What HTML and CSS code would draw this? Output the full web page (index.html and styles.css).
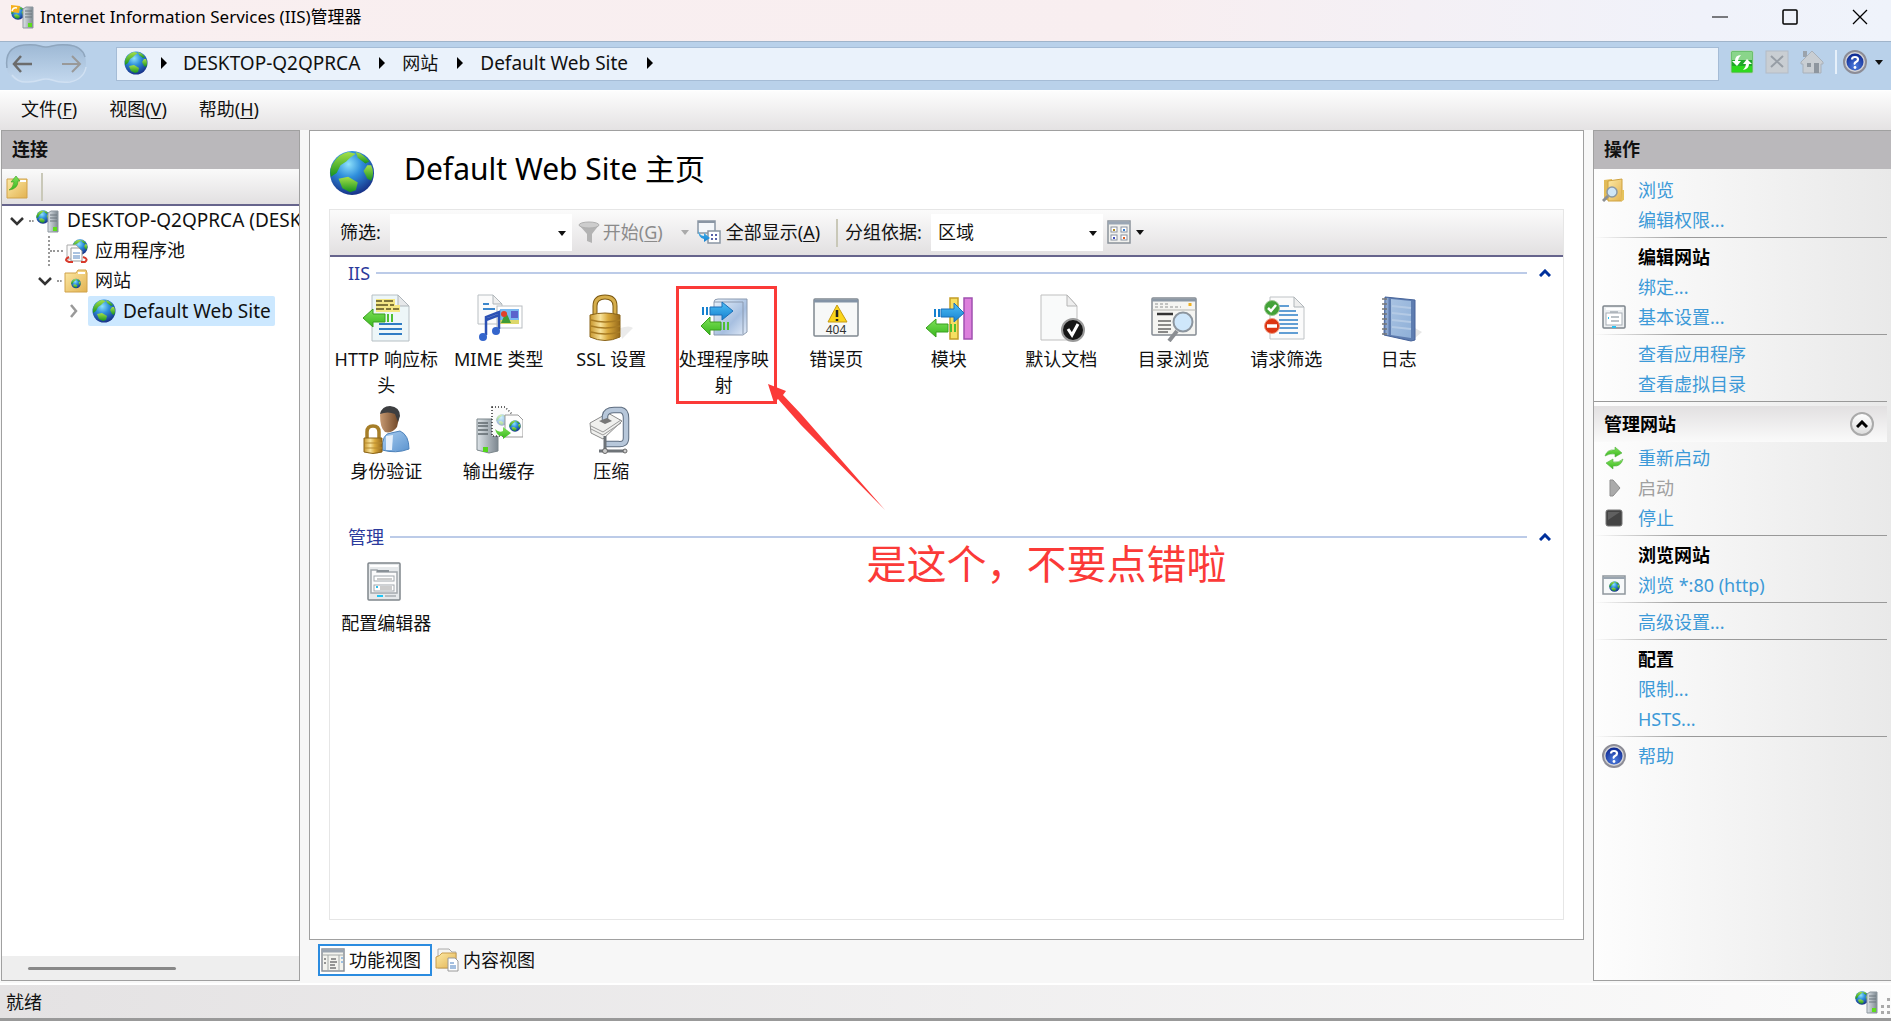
FILE: index.html
```html
<!DOCTYPE html>
<html lang="zh-CN">
<head>
<meta charset="utf-8">
<title>Internet Information Services (IIS)管理器</title>
<link rel="stylesheet" href="styles.css">
</head>
<body>
<svg class="sprite" aria-hidden="true">
  <defs>
    <radialGradient id="gSea" cx=".42" cy=".3" r=".75"><stop offset="0" stop-color="#8fe2fb"/><stop offset=".4" stop-color="#2f8fdc"/><stop offset="1" stop-color="#15277f"/></radialGradient>
    <linearGradient id="gLand" x1="0" y1="0" x2="0" y2="1"><stop offset="0" stop-color="#a5e04a"/><stop offset="1" stop-color="#15921e"/></linearGradient>
    <linearGradient id="gGreen" x1="0" y1="0" x2="0" y2="1"><stop offset="0" stop-color="#7fe05a"/><stop offset="1" stop-color="#38b81c"/></linearGradient>
    <linearGradient id="gBlue" x1="0" y1="0" x2="0" y2="1"><stop offset="0" stop-color="#4fc0f5"/><stop offset="1" stop-color="#1580d0"/></linearGradient>
    <linearGradient id="gGold" x1="0" y1="0" x2="1" y2="0"><stop offset="0" stop-color="#c8962c"/><stop offset=".35" stop-color="#f8e39a"/><stop offset=".6" stop-color="#d9a93c"/><stop offset="1" stop-color="#96691a"/></linearGradient>
    <linearGradient id="gFolder" x1="0" y1="0" x2="1" y2="1"><stop offset="0" stop-color="#fdeaa6"/><stop offset="1" stop-color="#e2b251"/></linearGradient>
    <linearGradient id="gSteel" x1="0" y1="0" x2="1" y2="0"><stop offset="0" stop-color="#dde3e8"/><stop offset="1" stop-color="#7d8890"/></linearGradient>
    <linearGradient id="gBox" x1="0" y1="0" x2="1" y2="1"><stop offset="0" stop-color="#e9f3fc"/><stop offset=".6" stop-color="#a7bfe0"/><stop offset="1" stop-color="#e3ecf8"/></linearGradient>
    <linearGradient id="gBook" x1="0" y1="0" x2="1" y2="1"><stop offset="0" stop-color="#a8c2e2"/><stop offset="1" stop-color="#8fb0d8"/></linearGradient>
    <linearGradient id="gShirt" x1="0" y1="0" x2="1" y2="1"><stop offset="0" stop-color="#a9cdf0"/><stop offset="1" stop-color="#5c94cf"/></linearGradient>
    <linearGradient id="gSkin" x1="0" y1="0" x2="1" y2="0"><stop offset="0" stop-color="#c79a72"/><stop offset="1" stop-color="#6e4526"/></linearGradient>
    <radialGradient id="gHelp" cx=".5" cy=".75" r=".7"><stop offset="0" stop-color="#4f7fe0"/><stop offset="1" stop-color="#0f2b94"/></radialGradient>
    <linearGradient id="gPill" x1="0" y1="0" x2="0" y2="1"><stop offset="0" stop-color="#9db8d4"/><stop offset="1" stop-color="#c3d8ee"/></linearGradient>
  </defs>
  <symbol id="globe" viewBox="0 0 24 24"><circle cx="12" cy="12" r="11.500" fill="url(#gSea)"/><path d="M2 7Q5 2 10 1L14 2L11 4L9 6L6 8L4 12L1 14Q0 10 2 7Z" fill="url(#gLand)"/><path d="M14 1Q18 2 21 6L19 7L15 4Z" fill="url(#gLand)"/><path d="M20 8L22 8Q24 12 22 16L20 15L18 11Z" fill="url(#gLand)"/><path d="M5 15L10 14L15 17L14 21L11 22L7 20Z" fill="url(#gLand)"/></symbol>
  <symbol id="server" viewBox="0 0 24 24"><use href="#globe" x="0" y="0" width="14" height="16"/><path d="M12 4L15 2H22V23H12Z" fill="url(#gSteel)" stroke="#8d979f"/><path d="M14 6H21M14 9H21M14 12H21" stroke="#6c767e"/><rect x="17" y="18" width="4" height="4" fill="#5fdc1c"/></symbol>
  <symbol id="app" viewBox="0 0 24 24"><use href="#server"/><path d="M0 0L9 1L8 8L0 7Z" fill="#f5b01f"/><path d="M1 6Q2 2 6 3" fill="none" stroke="#fff" stroke-width="1.500"/></symbol>
  <symbol id="up-folder" viewBox="0 0 24 24"><path d="M2 4H22V23H2Z" fill="url(#gFolder)" stroke="#d0a24a"/><path d="M15 6H21" stroke="#fff" stroke-width="2"/><path d="M4 15Q8 13 9 7L6 7L11 1L15 6L13 6Q13 14 4 15Z" fill="url(#gGreen)" stroke="#3a9a22" stroke-width=".6"/></symbol>
  <symbol id="pool" viewBox="0 0 24 24"><use href="#globe" x="8" y="0" width="16" height="16"/><path d="M3 6H12L15 9V20H3Z" fill="#fafafa" stroke="#aaa"/><path d="M7 9H15L18 12V22H7Z" fill="#fff" stroke="#999"/><path d="M9 14H16M9 17H16M9 19H16" stroke="#5585c0"/><path d="M5 18Q-1 21 5 23H9M17 23H21Q25 20 19 18" fill="none" stroke="#d83a2c" stroke-width="2"/></symbol>
  <symbol id="sites" viewBox="0 0 24 24"><path d="M1 4H12L14 1H22L23 4V23H1Z" fill="url(#gFolder)" stroke="#d0a24a"/><path d="M14 4H21" stroke="#fff" stroke-width="2"/><use href="#globe" x="7" y="9" width="10" height="11"/></symbol>
  <symbol id="funnel" viewBox="0 0 24 24"><path d="M2 5L10 14V21L15 23V14L22 5Z" fill="#b3b3b3"/><ellipse cx="12" cy="5" rx="10" ry="3" fill="#cdcdcd" stroke="#b0b0b0"/></symbol>
  <symbol id="show-all" viewBox="0 0 24 24"><rect x="1" y="1" width="17" height="12" fill="#f4f7fa" stroke="#8a96a4" stroke-width="1.500"/><path d="M1 2H18" stroke="#8a96a4" stroke-width="2"/><rect x="11" y="11" width="12" height="12" fill="#fff" stroke="#8a96a4" stroke-width="1.500"/><path d="M14 15H16M18 15H20M14 19H16M18 19H20" stroke="#5862a8" stroke-width="2"/><path d="M1 9Q2 16 7 16V13L13 18L7 22V19Q1 18 1 9Z" fill="url(#gBlue)"/></symbol>
  <symbol id="view-mode" viewBox="0 0 24 24"><rect x="1" y="1" width="22" height="22" fill="#f1f1ee" stroke="#8a929a" stroke-width="1.500"/><path d="M1 3H23" stroke="#9aa6b4" stroke-width="3"/><g fill="#fff" stroke="#8891a0"><rect x="4" y="7" width="6" height="5"/><rect x="14" y="7" width="6" height="5"/><rect x="4" y="15" width="6" height="5"/><rect x="14" y="15" width="6" height="5"/></g><path d="M6 10H8" stroke="#b08c20" stroke-width="2"/><path d="M16 10H18" stroke="#3a80d0" stroke-width="2"/><path d="M6 18H8" stroke="#4050c0" stroke-width="2"/><path d="M16 18H18" stroke="#e06020" stroke-width="2"/></symbol>
  <symbol id="refresh" viewBox="0 0 24 24"><rect x="1" y="1" width="22" height="22" rx="1" fill="#20a82a" stroke="#b7d9b5"/><rect x="2" y="2" width="20" height="8" fill="#8ad58a"/><rect x="2" y="16" width="20" height="6" fill="#2ed81e"/><path d="M11 5Q5 5 5 11H2L7 16L11 11H8Q8 8 11 5Z" fill="#fff"/><path d="M13 20Q19 19 19 14H22L17 9L13 14H16Q16 17 13 20Z" fill="#fff"/></symbol>
  <symbol id="stop-load" viewBox="0 0 24 24"><rect x="1" y="1" width="22" height="22" fill="#c9ced3" stroke="#b4bcc6"/><path d="M6 6L18 17M18 6L6 17" stroke="#979ea6" stroke-width="2"/></symbol>
  <symbol id="home" viewBox="0 0 24 24"><path d="M3 1H7V7H3Z" fill="#9ba3ac"/><path d="M12 1L23 12V14H21V23H3V14H1V12Z" fill="#c9ced3" stroke="#a9b1ba"/><rect x="14" y="13" width="5" height="10" fill="#8e969f"/><rect x="7" y="13" width="4" height="4" fill="#9098a0"/></symbol>
  <symbol id="help" viewBox="0 0 24 24"><circle cx="12" cy="12" r="11" fill="#d3d3d6" stroke="#8c8c96" stroke-width="2"/><circle cx="12" cy="12" r="8.500" fill="url(#gHelp)"/><path d="M9 9.500Q9 7 12 7T15 9.500Q15 11 13 12T12 14.500" fill="none" stroke="#fff" stroke-width="2.200"/><circle cx="12" cy="17.500" r="1.400" fill="#fff"/></symbol>
  <symbol id="browse" viewBox="0 0 24 24"><path d="M2 2L10 1V22H2Z" fill="#e2bb58"/><path d="M6 3L20 1V23H6Z" fill="url(#gFolder)" stroke="#cfa23f"/><path d="M20 12H22V22L19 23Z" fill="#e5c25c"/><circle cx="10" cy="14" r="5" fill="#cfe6f8" stroke="#8b98a4" stroke-width="1.500"/><path d="M6 18L1 23" stroke="#8b8f94" stroke-width="3"/></symbol>
  <symbol id="settings" viewBox="0 0 24 24"><rect x="1" y="1" width="22" height="22" rx="1" fill="#eceff1" stroke="#7e858c" stroke-width="1.500"/><path d="M4 4H20" stroke="#fff" stroke-width="2"/><rect x="4" y="8" width="16" height="12" fill="#fff" stroke="#a7aeb5"/><path d="M8 7H16M9 12H17M9 16H17" stroke="#a7aeb5" stroke-width="1.500"/><path d="M6 13H7M10 22H14" stroke="#28c0f0" stroke-width="2"/></symbol>
  <symbol id="restart" viewBox="0 0 24 24"><path d="M3 10Q5 3 13 4V1L20 7L13 11V8Q8 7 3 10Z" fill="url(#gGreen)" stroke="#55b045" stroke-width=".6"/><path d="M21 13Q19 21 11 20V23L4 17L11 13V16Q17 17 21 13Z" fill="url(#gGreen)" stroke="#55b045" stroke-width=".6"/></symbol>
  <symbol id="play" viewBox="0 0 24 24"><path d="M8 4L11 4L18 12L11 20H8Z" fill="#aaa" stroke="#8d8d8d"/></symbol>
  <symbol id="stop" viewBox="0 0 24 24"><rect x="4" y="4" width="16" height="16" rx="2" fill="#444" stroke="#777"/><path d="M6 14L18 6V6H6Z" fill="#606060"/></symbol>
  <symbol id="web-window" viewBox="0 0 24 24"><rect x="1" y="3" width="22" height="18" fill="#f7f9fa" stroke="#8f969d" stroke-width="1.500"/><path d="M1 5H23" stroke="#9aa5b0" stroke-width="2"/><use href="#globe" x="7" y="8" width="11" height="11"/></symbol>
  <symbol id="features" viewBox="0 0 24 24"><rect x="1" y="1" width="22" height="22" fill="#f3f3ee" stroke="#8a9098" stroke-width="1.500"/><path d="M1 3H23" stroke="#9aa4b0" stroke-width="3"/><path d="M1 7H23M7 7V23M18 7V23" stroke="#a4a9a8"/><path d="M10 11H15M9 14H16M9 17H14M9 20H15M3 11H5M3 15H5" stroke="#777" stroke-width="1.300"/><path d="M20 10H22M20 14H22" stroke="#4a90d8"/></symbol>
  <symbol id="content" viewBox="0 0 24 24"><path d="M3 5V1H14L17 4H21V20H3Z" fill="#f4f4f2" stroke="#aaa"/><path d="M1 20V9Q5 8 7 5H21V20Z" fill="url(#gFolder)" stroke="#c99d4c"/><path d="M13 10H20L23 13V23H13Z" fill="#fff" stroke="#999"/><path d="M15 15H19M15 18H21M15 20H21" stroke="#4a80c0"/></symbol>

  <symbol id="http" viewBox="0 0 48 48"><path d="M10 1H36L47 12V47H10Z" fill="#edf6f8" stroke="#b6bfc4"/><path d="M36 1V12H47Z" fill="#e6e8ea" stroke="#aeb5ba"/><path d="M14 5H33V11H38V18H14Z" fill="#f4e785"/><path d="M14 7H20M22 7H31M14 11H26M28 11H32M14 15H22M24 15H29M31 15H37" stroke="#5b5322" stroke-width="1.500"/><path d="M17 30H40M17 35H40M17 40H40" stroke="#2f7cc4" stroke-width="2"/><path d="M1 24L11 15V20H23V28H11V33Z" fill="url(#gGreen)" stroke="#3aa020"/><path d="M26 20V28M30 20V28" stroke="#4fc030" stroke-width="2"/></symbol>
  <symbol id="mime" viewBox="0 0 48 48"><path d="M3 1H18L27 10V30H3Z" fill="#fbfbfb" stroke="#b9bfc3"/><path d="M18 1V10H27Z" fill="#eee" stroke="#b0b6ba"/><path d="M8 10H14M8 15H20" stroke="#3c86cc" stroke-width="2"/><rect x="22" y="12" width="25" height="22" fill="#fff" stroke="#b9bec2"/><rect x="25" y="15" width="19" height="15" fill="#79b8f0"/><path d="M25 30V26H44V30Z" fill="#ddd86a"/><path d="M26 29L31 18L36 29Z" fill="#3f9c35"/><circle cx="29" cy="20" r="3" fill="#e0402a"/><rect x="36" y="17" width="7" height="7" fill="#5a62cc"/><path d="M11 41V23L24 18V35M11 26L24 21" fill="none" stroke="#2b50b4" stroke-width="2.500"/><ellipse cx="8" cy="43" rx="4" ry="4" fill="#3465cc"/><ellipse cx="21" cy="37" rx="4" ry="4" fill="#3465cc"/></symbol>
  <symbol id="lock" viewBox="0 0 48 48"><path d="M35 45L46 34Q43 31 33 34Z" fill="#ebebeb"/><path d="M8 22V12Q8 3 18 3T28 12V22" fill="none" stroke="#7d5a14" stroke-width="5"/><path d="M8 22V12Q8 3 18 3T28 12V22" fill="none" stroke="#d6ae4c" stroke-width="3"/><path d="M3 21Q18 17 33 21V43Q18 50 3 43Z" fill="url(#gGold)" stroke="#8a641a"/><path d="M4 26Q18 30 33 26M4 32Q18 36 33 32M4 38Q18 42 33 38" fill="none" stroke="#a87c24" stroke-width="1.500"/></symbol>
  <symbol id="handler" viewBox="0 0 48 48"><path d="M14 8Q14 5 18 5H47V38L43 41H14Z" fill="url(#gBox)" stroke="#8b9ab0"/><path d="M43 8V40M14 8H43" stroke="#8b9ab0"/><path d="M10 13H22V8L33 17L22 26V21H10Z" fill="url(#gBlue)" stroke="#1b6fb8"/><path d="M3 13V21M7 13V21" stroke="#1580d0" stroke-width="2"/><path d="M1 32L10 23V28H21V36H10V41Z" fill="url(#gGreen)" stroke="#3aa020"/><path d="M24 28V36M28 28V36" stroke="#50c030" stroke-width="2"/></symbol>
  <symbol id="modules" viewBox="0 0 48 48"><rect x="25" y="4" width="8" height="41" fill="#f5df62" stroke="#c39d26" stroke-width="1.500"/><rect x="39" y="4" width="8" height="41" fill="#dc80dc" stroke="#a050b0" stroke-width="1.500"/><path d="M16 15H29V9L39 19L29 28V23H16Z" fill="url(#gBlue)" stroke="#1b6fb8"/><path d="M10 15V23M14 15V23" stroke="#1580d0" stroke-width="2"/><path d="M1 34L11 25V30H23V38H11V43Z" fill="url(#gGreen)" stroke="#3aa020"/><path d="M26 30V38M30 30V38" stroke="#50c030" stroke-width="2"/></symbol>
  <symbol id="default-doc" viewBox="0 0 48 48"><path d="M4 1H30L40 12V46H4Z" fill="#f9fafa" stroke="#bfbfbf"/><path d="M30 1V12H40Z" fill="#eee" stroke="#b5b5b5"/><circle cx="36" cy="36" r="11" fill="#161616" stroke="#9a9a9a" stroke-width="2"/><path d="M31 35L35 41L41 30" fill="none" stroke="#fff" stroke-width="3"/></symbol>
  <symbol id="dir" viewBox="0 0 48 48"><rect x="2" y="4" width="44" height="37" rx="1" fill="#f5f5f2" stroke="#848b92" stroke-width="1.500"/><path d="M2 6H46" stroke="#8b97a4" stroke-width="3"/><path d="M5 10H20M5 13H31" stroke="#8f9191" stroke-dasharray="3 2"/><path d="M2 16H46" stroke="#b5b5b0"/><path d="M40 9V12" stroke="#f0b020" stroke-width="3"/><path d="M7 20H23" stroke="#333" stroke-width="2.500"/><path d="M8 27H21M8 31H21M8 35H21M8 38H18" stroke="#666" stroke-width="1.500"/><path d="M27 37L19 47" stroke="#8b8e92" stroke-width="4"/><circle cx="33" cy="28" r="9.500" fill="#cfe7fb" stroke="#8c959e" stroke-width="2"/></symbol>
  <symbol id="filter" viewBox="0 0 48 48"><path d="M8 3H32L42 13V45H8Z" fill="#fbfbfb" stroke="#bfc3c6"/><path d="M32 3V13H42Z" fill="#eee" stroke="#b0b6ba"/><path d="M17 12H27M17 17H34M17 21H36M17 26H36M17 30H36M17 34H36M17 39H36" stroke="#2f80c8" stroke-width="1.700"/><circle cx="10" cy="14" r="7.500" fill="#43a238" stroke="#9bc690"/><path d="M6 14L9 17L14 11" fill="none" stroke="#fff" stroke-width="2.500"/><circle cx="10" cy="32" r="7.500" fill="#dc3412" stroke="#ef9a80"/><path d="M5 32H15" stroke="#fff" stroke-width="3.500"/></symbol>
  <symbol id="log" viewBox="0 0 48 48"><path d="M40 44L47 38L38 33Z" fill="#e6e6e6"/><path d="M10 3L40 6V46L36 47L9 41Z" fill="#5e7db0" stroke="#46639a"/><path d="M16 5L36 7V44L16 41Z" fill="url(#gBook)"/><path d="M17 12L36 14M17 19L36 21M17 26L36 28M17 33L36 35" stroke="#b4cae5" stroke-width="2"/><path d="M12 4V41" stroke="#8ba6cf" stroke-width="3"/><path d="M7 5H12M7 10H12M7 15H12M7 20H12M7 25H12M7 30H12M7 35H12M7 40H12" stroke="#777" stroke-width="1.700"/></symbol>
  <symbol id="auth" viewBox="0 0 48 48"><path d="M20 44Q20 27 29 27L38 25Q47 29 47 43Q34 48 20 44Z" fill="url(#gShirt)" stroke="#4d82ba"/><path d="M24 30L31 29L30 44H24Z" fill="#e6f0fb"/><path d="M18 9Q20 1 28 1Q37 2 37 12L35 21Q30 28 23 26Q18 22 18 9Z" fill="url(#gSkin)"/><path d="M18 8Q20 0 28 0Q38 1 38 10L36 16L33 8Q26 5 18 8Z" fill="#3d3e40"/><path d="M5 32V26Q5 20 11 20T17 26V32" fill="none" stroke="#a67e28" stroke-width="3.500"/><path d="M2 32H20V46Q11 49 2 46Z" fill="url(#gGold)" stroke="#8a641a"/><path d="M3 37H20M3 42H20" stroke="#b68a30"/></symbol>
  <symbol id="cache" viewBox="0 0 48 48"><path d="M2 13H16L23 9V45L14 47L2 44Z" fill="url(#gSteel)" stroke="#7c878c"/><path d="M3 17H13M3 20H13M3 24H13M3 28H13" stroke="#5f686d" stroke-width="1.500"/><rect x="8" y="41" width="5" height="5" fill="#53d61c"/><path d="M17 1H30L37 8V30H17Z" fill="#fbfbfb" stroke="#333" stroke-dasharray="1 2" stroke-width="1.500"/><use href="#globe" x="21" y="8" width="12" height="12" opacity=".4"/><path d="M30 9H43L48 14V31H30Z" fill="#fdfdfd" stroke="#999"/><use href="#globe" x="34" y="14" width="12" height="12"/><path d="M20 23Q24 27 28 25V21L36 27L28 33V30Q22 31 20 23Z" fill="url(#gGreen)"/></symbol>
  <symbol id="compress" viewBox="0 0 48 48"><path d="M3 17L21 7L35 15L16 33L4 27Z" fill="#f0f0ee" stroke="#8b8b8b"/><path d="M4 20L16 26L34 14M4 23L16 29L34 17" fill="none" stroke="#999"/><path d="M18 14V10Q19 4 27 4H34Q39 5 39 12V32Q39 39 31 38H18" fill="none" stroke="#5f6e80" stroke-width="6.500"/><path d="M18 14V10Q19 4 27 4H34Q39 5 39 12V32Q39 39 31 38H18" fill="none" stroke="#b7c7da" stroke-width="4.500"/><path d="M12 15L20 12L25 15L18 18Z" fill="#777"/><path d="M18 30V44M12 45H38" stroke="#6e7378" stroke-width="3"/><circle cx="18" cy="45" r="2.500" fill="#ccc" stroke="#666"/><circle cx="38" cy="45" r="2" fill="#ccc" stroke="#666"/></symbol>
  <symbol id="config" viewBox="0 0 48 48"><rect x="6" y="5" width="32" height="37" rx="1" fill="#e6e9eb" stroke="#80868c" stroke-width="1.500"/><path d="M8 8H36" stroke="#fff" stroke-width="2"/><path d="M9 35V12H15V14H35V35Z" fill="#fbfbfb" stroke="#a2a8ad" stroke-width="1.500"/><path d="M15 13H27" stroke="#8a9197" stroke-width="2"/><rect x="12" y="18" width="20" height="5" fill="#fff" stroke="#a2a8ad"/><rect x="12" y="27" width="20" height="6" fill="#fff" stroke="#a2a8ad"/><path d="M15 21H30M18 29H30M18 31H30" stroke="#999"/><path d="M14 29H16" stroke="#30bce8" stroke-width="2"/><path d="M15 38H21" stroke="#1ec4f4" stroke-width="2"/><path d="M23 38H34" stroke="#b7bcc0" stroke-width="2"/></symbol>
  <symbol id="caret" viewBox="0 0 8 5"><path d="M0 0H8L4 5Z" fill="currentColor"/></symbol>
  <symbol id="crumb" viewBox="0 0 6 12"><path d="M0 0V12L6 6Z" fill="#000"/></symbol>
  <symbol id="chev-down" viewBox="0 0 16 16"><path d="M2 5L8 11L14 5" fill="none" stroke="#333" stroke-width="2.500"/></symbol>
  <symbol id="chev-right" viewBox="0 0 16 16"><path d="M6 2L11 8L6 14" fill="none" stroke="#999" stroke-width="2.500"/></symbol>
  <symbol id="chev-up" viewBox="0 0 12 8"><path d="M1 7L6 2L11 7" fill="none" stroke="currentColor" stroke-width="3"/></symbol>
</svg>

<header class="titlebar">
  <svg class="ic"><use href="#app"/></svg>
  <span class="caption">Internet Information Services (IIS)管理器</span>
  <button class="winbtn" aria-label="最小化"><svg viewBox="0 0 16 16"><path d="M0 8H16" stroke="#000"/></svg></button>
  <button class="winbtn" aria-label="最大化"><svg viewBox="0 0 16 16"><rect x="1" y="1" width="14" height="14" rx="1" fill="none" stroke="#000" stroke-width="1.500"/></svg></button>
  <button class="winbtn" aria-label="关闭"><svg viewBox="0 0 16 16"><path d="M1 1L15 15M15 1L1 15" stroke="#000" stroke-width="1.300"/></svg></button>
</header>

<nav class="navbar">
  <button class="history" aria-label="后退和前进">
    <svg viewBox="0 0 84 42"><path d="M20 2Q30 1 36 3T48 3Q56 1 64 1Q82 4 82 20T64 39Q54 40 48 37T36 37Q30 40 22 39Q2 38 2 20Q3 4 20 2Z" fill="url(#gPill)"/><path d="M3 25Q0 4 20 2Q30 1 36 3T48 3Q56 1 64 2Q78 3 81 14" fill="none" stroke="#8fa6be" stroke-width="1.500"/><path d="M8 32Q14 40 24 39Q30 39 36 37T48 37Q56 40 66 39Q80 36 82 24" fill="none" stroke="#d0e0f2" stroke-width="1.500"/><path d="M28 21H10M17 13L10 21L17 29" fill="none" stroke="#6c6c6c" stroke-width="2.500"/><path d="M58 21H76M68 13L76 21L68 29" fill="none" stroke="#999" stroke-width="2"/></svg>
  </button>
  <div class="address">
    <svg class="ic"><use href="#globe"/></svg>
    <svg class="crumb"><use href="#crumb"/></svg><a href="#">DESKTOP-Q2QPRCA</a>
    <svg class="crumb"><use href="#crumb"/></svg><a href="#" class="cjk">网站</a>
    <svg class="crumb"><use href="#crumb"/></svg><a href="#">Default Web Site</a>
    <svg class="crumb"><use href="#crumb"/></svg>
  </div>
  <div class="navtools">
    <button aria-label="刷新"><svg class="ic"><use href="#refresh"/></svg></button>
    <button aria-label="停止加载"><svg class="ic"><use href="#stop-load"/></svg></button>
    <button aria-label="主页"><svg class="ic"><use href="#home"/></svg></button>
    <button class="helpbtn" aria-label="帮助"><svg class="ic"><use href="#help"/></svg><svg class="caret"><use href="#caret"/></svg></button>
  </div>
</nav>

<nav class="menubar">
  <button>文件(<u>F</u>)</button><button>视图(<u>V</u>)</button><button>帮助(<u>H</u>)</button>
</nav>

<div class="workspace">
  <aside class="panel connections">
    <h2 class="panel-title">连接</h2>
    <div class="tree-tools"><button aria-label="连接"><svg class="ic"><use href="#up-folder"/></svg></button><i class="vsep"></i></div>
    <ul class="tree">
      <li><div class="node latin"><svg class="chev"><use href="#chev-down"/></svg><i class="dots"></i><svg class="ic"><use href="#server"/></svg><span>DESKTOP-Q2QPRCA (DESK</span></div>
        <ul>
          <li><div class="node"><i class="chev line"></i><i class="dots long"></i><svg class="ic"><use href="#pool"/></svg><span>应用程序池</span></div></li>
          <li><div class="node"><svg class="chev"><use href="#chev-down"/></svg><i class="dots"></i><svg class="ic"><use href="#sites"/></svg><span>网站</span></div>
            <ul>
              <li><div class="node latin"><svg class="chev"><use href="#chev-right"/></svg><i class="dots none"></i><a href="#" class="selected"><svg class="ic"><use href="#globe"/></svg>Default Web Site</a></div></li>
            </ul>
          </li>
        </ul>
      </li>
    </ul>
    <div class="hscroll"><i></i></div>
  </aside>

  <div class="center">
    <main class="panel content">
      <header class="page-head"><svg><use href="#globe"/></svg><h1>Default Web Site 主页</h1></header>
      <div class="listbox">
        <div class="toolbar">
          <label for="filter-text">筛选:</label>
          <span class="combo filter-box"><input id="filter-text" type="text"><svg class="caret"><use href="#caret"/></svg></span>
          <button class="go" disabled><svg class="ic"><use href="#funnel"/></svg>开始(<u>G</u>)<svg class="caret"><use href="#caret"/></svg></button>
          <button class="all"><svg class="ic"><use href="#show-all"/></svg>全部显示(<u>A</u>)</button>
          <i class="vsep"></i>
          <label for="group-by">分组依据:</label>
          <span class="combo group-box"><select id="group-by"><option>区域</option></select><svg class="caret"><use href="#caret"/></svg></span>
          <button class="mode" aria-label="视图"><svg class="ic"><use href="#view-mode"/></svg><svg class="caret"><use href="#caret"/></svg></button>
        </div>
        <section>
          <h3>IIS<i></i><svg><use href="#chev-up"/></svg></h3>
          <div class="features">
            <div class="item"><svg><use href="#http"/></svg><span>HTTP 响应标头</span></div>
            <div class="item"><svg><use href="#mime"/></svg><span>MIME 类型</span></div>
            <div class="item"><svg><use href="#lock"/></svg><span>SSL 设置</span></div>
            <div class="item"><svg><use href="#handler"/></svg><span>处理程序映射</span>
              <div class="mark-box"></div>
              <svg class="mark-arrow" viewBox="0 0 220 224"><path d="M100 95L118 102L115 106L133 125L217 221L133 136L110 110L106 114Z" fill="#fb3a38"/></svg>
              <p class="mark-text">是这个，不要点错啦</p>
            </div>
            <div class="item"><svg viewBox="0 0 48 48"><rect x="2" y="5" width="44" height="37" rx="1" fill="#f7f8f8" stroke="#808890" stroke-width="1.500"/><path d="M2 7H46" stroke="#8393a6" stroke-width="3"/><path d="M25 11L35 28H16Z" fill="#fbd51b" stroke="#c79b12" stroke-linejoin="round"/><path d="M25 16V23M25 25V27" stroke="#222" stroke-width="2.500"/><text class="code" x="24" y="40" text-anchor="middle" fill="#333">404</text></svg><span>错误页</span></div>
            <div class="item"><svg><use href="#modules"/></svg><span>模块</span></div>
            <div class="item"><svg><use href="#default-doc"/></svg><span>默认文档</span></div>
            <div class="item"><svg><use href="#dir"/></svg><span>目录浏览</span></div>
            <div class="item"><svg><use href="#filter"/></svg><span>请求筛选</span></div>
            <div class="item"><svg><use href="#log"/></svg><span>日志</span></div>
            <div class="item"><svg><use href="#auth"/></svg><span>身份验证</span></div>
            <div class="item"><svg><use href="#cache"/></svg><span>输出缓存</span></div>
            <div class="item"><svg><use href="#compress"/></svg><span>压缩</span></div>
          </div>
        </section>
        <section>
          <h3>管理<i></i><svg><use href="#chev-up"/></svg></h3>
          <div class="features">
            <div class="item"><svg><use href="#config"/></svg><span>配置编辑器</span></div>
          </div>
        </section>
      </div>
    </main>
    <div class="tabs">
      <button class="active"><svg class="ic"><use href="#features"/></svg>功能视图</button>
      <button><svg class="ic"><use href="#content"/></svg>内容视图</button>
    </div>
  </div>

  <aside class="panel actions">
    <h2 class="panel-title">操作</h2>
    <ul class="first">
      <li><svg class="ic"><use href="#browse"/></svg><a href="#">浏览</a></li>
      <li><a href="#">编辑权限...</a></li>
    </ul>
    <ul>
      <li><b>编辑网站</b></li>
      <li><a href="#">绑定...</a></li>
      <li><svg class="ic"><use href="#settings"/></svg><a href="#">基本设置...</a></li>
    </ul>
    <ul class="last">
      <li><a href="#">查看应用程序</a></li>
      <li><a href="#">查看虚拟目录</a></li>
    </ul>
    <h3>管理网站<button aria-label="折叠"><svg><use href="#chev-up"/></svg></button></h3>
    <ul class="first">
      <li><svg class="ic"><use href="#restart"/></svg><a href="#">重新启动</a></li>
      <li class="off"><svg class="ic"><use href="#play"/></svg><span>启动</span></li>
      <li><svg class="ic"><use href="#stop"/></svg><a href="#">停止</a></li>
    </ul>
    <ul>
      <li><b>浏览网站</b></li>
      <li><svg class="ic"><use href="#web-window"/></svg><a href="#">浏览 *:80 (http)</a></li>
    </ul>
    <ul>
      <li><a href="#">高级设置...</a></li>
    </ul>
    <ul>
      <li><b>配置</b></li>
      <li><a href="#">限制...</a></li>
      <li><a href="#">HSTS...</a></li>
    </ul>
    <ul>
      <li><svg class="ic"><use href="#help"/></svg><a href="#">帮助</a></li>
    </ul>
  </aside>
</div>

<footer class="statusbar"><span>就绪</span><svg class="ic"><use href="#server"/></svg><svg class="grip" viewBox="0 0 12 20"><path d="M8 1H11V4H8ZM2 8H5V11H2ZM8 8H11V11H8ZM2 14H5V17H2ZM8 14H11V17H8Z" fill="#aaa"/></svg></footer>
</body>
</html>
```
FILE: styles.css
```css
* { box-sizing: border-box; }
body {
  margin: 0;
  min-height: 100vh;
  display: flex;
  flex-direction: column;
  background: #f7f7f7;
  color: #111;
  font: 18px/30px "Noto Sans", "Noto Sans CJK SC", sans-serif;
}
ul { list-style: none; margin: 0; padding: 0; }
h1, h2, h3, p { margin: 0; font-weight: 400; }
a { color: inherit; text-decoration: none; }
button, input, select { font: inherit; color: inherit; border: 0; padding: 0; margin: 0; background: none; }
button { display: flex; align-items: center; }
svg { display: block; flex: none; }
u { text-underline-offset: 2px; text-decoration-thickness: 1px; }
.sprite { position: absolute; width: 0; height: 0; }
.ic { width: 24px; height: 24px; }
.caret { width: 8px; height: 5px; }
.latin { font-size: 19px; }
.vsep { width: 2px; height: 28px; background: #c9c8b8; }

.titlebar {
  display: flex;
  align-items: center;
  height: 42px;
  padding: 0 6px 7px 11px;
  background: linear-gradient(90deg, #f9eff0 0%, #f8eef0 60%, #f0f2fa 90%, #eff3fb 100%);
  border-bottom: 1px solid #a0b4ca;
}
.caption { flex: 1; margin-left: 5px; font-size: 17px; color: #000; }
.winbtn { width: 70px; height: 34px; justify-content: center; }
.winbtn:last-child { width: 50px; margin-left: 10px; }
.winbtn svg { width: 16px; height: 16px; }

.navbar {
  display: flex;
  align-items: center;
  height: 48px;
  padding: 0 8px 5px 4px;
  background: #b9d1ea;
}
.history { width: 84px; height: 42px; margin-right: 28px; }
.history svg { width: 84px; height: 42px; }
.address {
  flex: 1;
  display: flex;
  align-items: center;
  height: 34px;
  padding: 0 0 1px 7px;
  background: #eaf2fb;
  border: 1px solid #a5bcd6;
  font-size: 19px;
}
.address .cjk { font-size: 18px; }
.address .ic { margin-right: 13px; }
.crumb { width: 6px; height: 12px; margin: 0 17px 0 19px; }
.address .ic + .crumb { margin: 0 16px 0 0; }
.navtools { display: flex; align-items: center; gap: 11px; margin-left: 11px; padding-bottom: 3px; }
.helpbtn { border-left: 2px solid #e6f0fa; padding-left: 6px; gap: 8px; }

.menubar {
  display: flex;
  height: 40px;
  padding: 0 21px 4px;
  gap: 32px;
  background: linear-gradient(#fdfdfd, #e4e2e3);
  border-top: 1px solid #fff;
}

.workspace { flex: 1; display: flex; padding-bottom: 2px; }
.panel { border: 1px solid #a0a0a0; }
.panel-title {
  height: 38px;
  padding: 0 10px;
  line-height: 37px;
  font-size: 18px;
  font-weight: 700;
  background: #bab8bb;
}
.connections { width: 299px; margin: 0 9px 0 1px; background: #fff; display: flex; flex-direction: column; }
.tree-tools {
  display: flex;
  align-items: center;
  gap: 12px;
  height: 37px;
  padding-left: 3px;
  background: linear-gradient(#fafafa, #e2e0e1);
  border-bottom: 2px solid #66648c;
}
.tree { flex: 1; overflow: hidden; }
.node { display: flex; align-items: center; height: 30px; padding-left: 7px; white-space: nowrap; line-height: 28px; }
.tree ul .node { padding-left: 35px; }
.tree ul ul .node { padding-left: 63px; }
.node .chev { width: 16px; height: 16px; flex: none; }
.node .line { height: 30px; border-left: 2px dotted #999; margin-left: 11px; width: 2px; }
.dots { flex: none; width: 5px; margin: 0 2px 0 4px; border-top: 2px dotted #999; }
.dots.long { width: 13px; margin: 0 1px 0 0; }
.dots.none { border: 0; }
.node span { margin-left: 7px; padding-bottom: 2px; }
.selected {
  display: flex;
  align-items: center;
  gap: 7px;
  height: 30px;
  margin-left: -4px;
  padding: 0 4px;
  background: #cce8ff;
  border-radius: 2px;
}
.hscroll { height: 24px; padding: 11px 26px; background: #eee; }
.hscroll i { display: block; width: 148px; height: 3px; border-radius: 2px; background: #888; }

.center { flex: 1; min-width: 0; display: flex; flex-direction: column; }
.content { flex: 1; display: flex; flex-direction: column; padding: 0 19px; background: #fff; }
.page-head { display: flex; align-items: center; gap: 29px; height: 78px; }
.page-head svg { width: 46px; height: 46px; margin-top: 6px; }
.page-head h1 { font-size: 30px; color: #000; line-height: 40px; padding-bottom: 3px; }
.listbox { flex: 1; border: 1px solid #e6e6e6; margin-bottom: 19px; }
.toolbar {
  display: flex;
  align-items: center;
  height: 47px;
  padding-left: 10px;
  background: linear-gradient(#fbfbfb, #e2e0e1);
  border-bottom: 2px solid #66648c;
}
.toolbar label, .toolbar button { padding-bottom: 1px; }
.combo { position: relative; display: block; height: 37px; background: #fff; }
.combo input, .combo select { width: 100%; height: 36px; padding: 0 7px; appearance: none; outline: 0; }
.combo .caret { position: absolute; right: 6px; top: 17px; }
.filter-box { width: 182px; margin: 0 5px 0 9px; }
.group-box { width: 172px; margin: 0 4px 0 9px; }
.go { color: #8b8b8b; }
.go .ic { margin-right: 2px; }
.go .caret { margin: 0 8px 0 18px; color: #aaa; }
.all .ic { margin-right: 5px; }
.toolbar .vsep { margin: 0 7px 0 16px; }
.mode { gap: 5px; }

section h3 {
  display: flex;
  align-items: center;
  gap: 6px;
  height: 32px;
  padding: 0 12px 0 18px;
  font-size: 18px;
  color: #2b3a9c;
}
section h3 i { flex: 1; height: 2px; background: #bccbe8; margin-right: 6px; }
section h3 svg { width: 12px; height: 8px; color: #00309c; }
section + section { margin-top: 8px; }
.features {
  display: grid;
  grid-template-columns: repeat(auto-fill, minmax(112px, 1fr));
  grid-auto-rows: 112px;
  padding-right: 108px;
}
.item {
  position: relative;
  display: flex;
  flex-direction: column;
  align-items: center;
  padding-top: 5px;
  gap: 4px;
  text-align: center;
  line-height: 26px;
}
.item > svg { width: 48px; height: 48px; }
.item span { width: 107px; }
.code { font-size: 12px; }
.mark-box { position: absolute; left: 8px; top: -3px; width: 101px; height: 118px; border: 3px solid #fb3a38; }
.item .mark-arrow { position: absolute; left: 0; top: 0; width: 220px; height: 224px; pointer-events: none; }
.mark-text {
  position: absolute;
  left: 199px;
  top: 251px;
  color: #fb3a38;
  font-size: 40px;
  line-height: 48px;
  white-space: nowrap;
}

.tabs { display: flex; align-items: center; height: 41px; padding: 0 9px 2px; gap: 1px; }
.tabs button { height: 32px; padding: 0 9px 0 1px; gap: 4px; border: 1px solid transparent; }
.tabs .active { background: #fff; border: 2px solid #2b8ce0; }

.actions {
  width: 298px;
  margin-left: 9px;
  border-right: 0;
  background: linear-gradient(90deg, #fdfdfd, #e9e9e9);
}
.actions ul {
  margin-right: 4px;
  padding-top: 7px;
  background: linear-gradient(90deg, transparent, #999 30%) 0 2px / 100% 1px no-repeat;
}
.actions .first { background: none; padding-top: 6px; }
.actions .last { border-bottom: 1px solid #999; padding-bottom: 2px; }
.actions h3 + .first { padding-top: 1px; }
.actions li { display: grid; grid-template-columns: 24px 1fr; column-gap: 12px; align-items: center; height: 30px; padding-left: 8px; color: #3d9ad8; }
.actions li > :last-child { grid-column: 2; }
.actions b { color: #000; }
.actions .off { color: #a0a0a0; }
.actions h3 {
  display: flex;
  justify-content: space-between;
  align-items: center;
  height: 36px;
  margin: 4px 4px 0 0;
  padding: 0 13px 0 10px;
  font-size: 18px;
  font-weight: 700;
  background: linear-gradient(#e2e0e1, #fafafa);
  color: #000;
}
.actions h3 button { width: 24px; height: 24px; justify-content: center; border: 2px solid #aaa; border-radius: 50%; background: linear-gradient(#fff, #ddd); }
.actions h3 svg { width: 12px; height: 8px; }

.statusbar {
  display: flex;
  align-items: center;
  height: 38px;
  padding: 0 0 0 6px;
  background: linear-gradient(90deg, #e4e2e3, #fbfbfb);
  border-top: 2px solid #fff;
  border-bottom: 3px solid #999;
}
.statusbar span { flex: 1; }
.grip { width: 12px; height: 20px; margin-top: 10px; }
```
